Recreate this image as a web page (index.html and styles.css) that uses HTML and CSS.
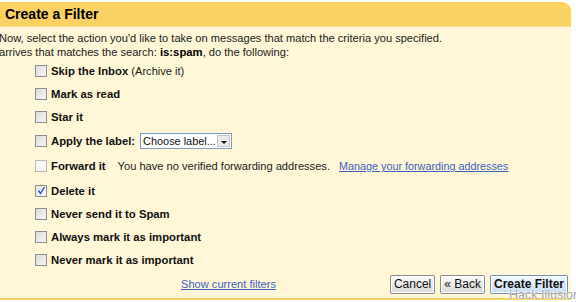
FILE: index.html
```html
<!DOCTYPE html>
<html lang="en">
<head>
  <meta charset="UTF-8">
  <title>Create a Filter</title>
  <link rel="stylesheet" href="styles.css">
</head>
<body>

  <div class="panel">
    <div class="panel-head">Create a Filter</div>

    <div class="panel-body">
      <p class="intro">Now, select the action you'd like to take on messages that match the criteria you specified.<br>
        arrives that matches the search: <b>is:spam</b>, do the following:</p>

      <div class="actions">
        <label class="row"><span class="box"></span><b>Skip the Inbox</b>&nbsp;<span class="note-plain">(Archive it)</span></label>
        <label class="row"><span class="box"></span><b>Mark as read</b></label>
        <label class="row"><span class="box"></span><b>Star it</b></label>
        <label class="row row-label"><span class="box"></span><b>Apply the label:</b>
          <span class="select"><span class="select-text">Choose label...</span><span class="select-arrow"></span></span>
        </label>
        <label class="row row-forward"><span class="box disabled"></span><b>Forward it</b>
          <span class="note">You have no verified forwarding addresses.</span>
          <a href="#" class="link">Manage your forwarding addresses</a>
        </label>
        <label class="row"><span class="box checked">
          <svg width="9" height="9" viewBox="0 0 9 9"><path d="M1.5 4.5 L3.5 7.5 L7.5 1" fill="none" stroke="#2a52c8" stroke-width="1.4"/></svg>
        </span><b>Delete it</b></label>
        <label class="row"><span class="box"></span><b>Never send it to Spam</b></label>
        <label class="row"><span class="box"></span><b>Always mark it as important</b></label>
        <label class="row"><span class="box"></span><b>Never mark it as important</b></label>
      </div>

      <div class="footer">
        <a href="#" class="link filters-link">Show current filters</a>
        <div class="buttons">
          <button class="btn">Cancel</button>
          <button class="btn">&laquo; Back</button>
          <button class="btn btn-main">Create Filter</button>
        </div>
      </div>
    </div>
  </div>

  <div class="watermark">Hack Illusior</div>

</body>
</html>
```

FILE: styles.css
```css
* {
  margin: 0;
  padding: 0;
  box-sizing: border-box;
}

body {
  background-color: #fff;
  font-family: "Liberation Sans", Arial, sans-serif;
  font-size: 11.1px;
  color: #222;
  overflow: hidden;
  position: relative;
  height: 302px;
}

.panel {
  margin: 2px 0 0 -8px;
  width: 579px;
  height: 298px;
  background-color: #fff7d7;
  border-bottom: 2px solid #fad163;
  border-radius: 0 9px 0 9px;
  overflow: hidden;
}

.panel-head {
  background-color: #fad163;
  height: 25px;
  padding: 4px 0 0 13px;
  font-size: 14px;
  font-weight: bold;
  color: #000;
  border-bottom: 1px solid #f6dc8c;
}

.panel-body {
  padding: 4px 0 0 7px;
}

.intro {
  line-height: 14px;
  color: #222;
}

.intro b {
  color: #000;
  font-size: 11.3px;
}

.actions {
  display: flex;
  flex-direction: column;
  padding: 0 0 0 36px;
}

.row {
  display: flex;
  align-items: center;
  height: 23.1px;
  color: #222;
  white-space: nowrap;
}

.row b {
  color: #111;
  font-size: 11.3px;
}

.row-label {
  height: 25px;
}

.row-forward {
  height: 26px;
}

.box {
  width: 12px;
  height: 12px;
  margin-right: 4px;
  border: 1px solid #8e8f8f;
  background: linear-gradient(135deg, #dcdcdc, #f5f5f5);
  display: flex;
  align-items: center;
  justify-content: center;
  flex-shrink: 0;
}

.box.disabled {
  border-color: #b9b9b9;
  background: #f7f7f5;
}

.box.checked {
  background: linear-gradient(135deg, #e4e4e4, #fbfbfb);
}

.select {
  display: flex;
  align-items: stretch;
  margin-left: 5px;
  width: 92px;
  height: 16px;
  border: 1px solid #7f9db9;
  background-color: #fff;
}

.select-text {
  flex: 1;
  padding-left: 2px;
  font-size: 10.9px;
  line-height: 14px;
  color: #111;
  white-space: nowrap;
  overflow: hidden;
}

.select-arrow {
  width: 13px;
  flex-shrink: 0;
  margin: 1px;
  background-color: #e9e9e9;
  border: 1px solid #c6c6c6;
  position: relative;
}

.select-arrow::after {
  content: "";
  position: absolute;
  left: 3px;
  top: 5px;
  border-left: 3px solid transparent;
  border-right: 3px solid transparent;
  border-top: 3px solid #000;
}

.note {
  margin-left: 12px;
}

.link {
  color: #3d62c0;
  text-decoration: underline;
}

.row-forward .link {
  margin-left: 9px;
  font-size: 10.8px;
}

.footer {
  display: flex;
  align-items: center;
  justify-content: space-between;
  padding: 3px 0 0 182px;
}

.buttons {
  display: flex;
  gap: 5px;
  padding-right: 3px;
}

.btn {
  font-family: "Liberation Sans", Arial, sans-serif;
  font-size: 12px;
  color: #111;
  height: 19px;
  padding: 0 3px;
  border: 1px solid #8a8a8a;
  border-radius: 2px;
  background: linear-gradient(#fbfbfb, #d9d9d9);
  box-shadow: inset 0 0 0 1px #fff;
}

.btn-main {
  font-weight: bold;
  border-color: #6f8fbf;
  background: linear-gradient(#f3f8ff, #c9dcf3);
}

.watermark {
  position: absolute;
  left: 509px;
  top: 288px;
  font-size: 12.5px;
  white-space: nowrap;
  color: #a5a5a5;
  text-shadow: 0 0 1px #fff, 0 0 1px #fff;
}
```
